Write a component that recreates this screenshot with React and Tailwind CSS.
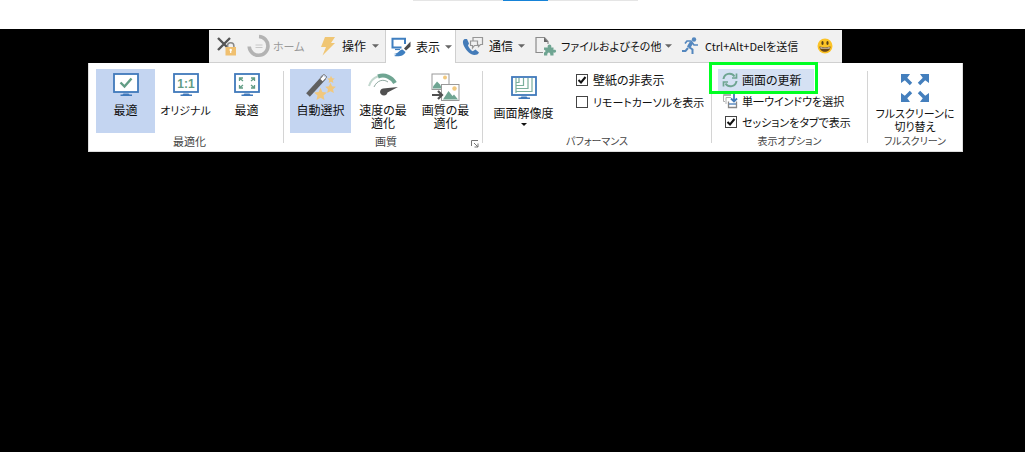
import { useState } from 'react'
import clsx from 'clsx'

function Caret({ className = 'w-[7px] h-1' }) {
  return (
    <svg viewBox="0 0 8 4" className={clsx('shrink-0', className)} fill="currentColor" aria-hidden="true">
      <path d="M0 0h8L4 4z" />
    </svg>
  )
}

function CloseLockIcon() {
  return (
    <svg viewBox="0 0 20 20" className="w-5 h-5 shrink-0" fill="none" aria-hidden="true">
      <path d="M1 2l12 12M13 2L1 14" stroke="#555" strokeWidth="2.400" />
      <path d="M10.500 12v-2a3.200 3.200 0 0 1 6.400 0v2" stroke="#888" strokeWidth="1.500" />
      <rect x="8.500" y="11" width="10.500" height="8.500" fill="#f0c070" />
      <circle cx="13.700" cy="14" r="1.200" fill="#fff" />
      <path d="M13.700 14v3" stroke="#fff" strokeWidth="1.200" />
    </svg>
  )
}

function HomeIcon() {
  return (
    <svg viewBox="0 0 24 24" className="w-6 h-6 shrink-0" fill="none" aria-hidden="true">
      <path d="M12 2.500a9.400 9.400 0 1 1-9.800 10" stroke="#b3b3b3" strokeWidth="3.600" />
      <path d="M8.500 11h7M8.500 13.500h7" stroke="#c8c8c8" />
    </svg>
  )
}

function BoltIcon() {
  return (
    <svg viewBox="0 0 16 20" className="w-4 h-5 shrink-0" fill="#f0c674" aria-hidden="true">
      <path d="M5 1h10l-4 6h4L2.500 19.500 6 11H1z" />
    </svg>
  )
}

function DisplayIcon() {
  return (
    <svg viewBox="0 0 20 20" className="w-5 h-5 shrink-0" fill="none" aria-hidden="true">
      <path d="M14 7V1.800H1.500v8.700h9" stroke="#3f7fc0" strokeWidth="2" />
      <path d="M4 12.500h5" stroke="#3f7fc0" strokeWidth="1.200" />
      <path d="M19.500 4.500v5L15 13.500l-2-2z" fill="#4d4d4d" />
      <path d="M11.500 12.500l3 2.500c-1 3.500-6 5-11.500 4l2.500-1.500-3-.5c5 0 5-4 9-4.500z" fill="#3f7fc0" />
    </svg>
  )
}

function CallIcon() {
  return (
    <svg viewBox="0 0 22 20" className="w-[22px] h-5 shrink-0" fill="none" aria-hidden="true">
      <path
        d="M3 3C.5 3.500.3 7 2.500 11s6 8 10 8c2 0 4-.8 4.500-2.500l-3.500-3-2.800 1.800C8.500 14 7 12 6 9.500L7 7.500 5 3z"
        fill="#447bb8"
      />
      <path
        d="M11 5V1.500h9.500v7h-2l-2 2V8.500M8.500 5h7v4.500h-3l-2 2.500V9.500h-2z"
        stroke="#969696"
        strokeWidth="1.200"
      />
    </svg>
  )
}

function FileIcon() {
  return (
    <svg viewBox="0 0 22 20" className="w-[22px] h-5 shrink-0" fill="none" aria-hidden="true">
      <path d="M8 16.500H1V1.500h8.500l3.500 4V8" stroke="#8b8b8b" strokeWidth="1.200" />
      <path d="M9 1.500v4.500h4z" fill="#666" />
      <path
        d="M9 11.500h3.800c-1.300-4 4.700-4 3.400 0h2.300v2.500c3.500-1.200 3.500 3.500 0 2.500v3h-3.200c.6-4-3.600-4-3 0H9v-3c2-.3 2-2.500 0-2.700z"
        fill="#6fa592"
      />
    </svg>
  )
}

function RunnerIcon() {
  return (
    <svg viewBox="0 0 18 20" className="w-[18px] h-5 shrink-0" fill="none" stroke="#5487be" aria-hidden="true">
      <circle cx="13" cy="3.500" r="2.200" fill="#5487be" stroke="none" />
      <path d="M10.500 6.500l-3 5" strokeWidth="3.600" />
      <path d="M4 7.500L6 5h4l3 4h4" strokeWidth="1.700" />
      <path d="M8 11l3.500 2.500V18M7 12l-2.500 3H1" strokeWidth="2" />
    </svg>
  )
}

function SmileIcon() {
  return (
    <svg viewBox="0 0 16 16" className="w-4 h-4 shrink-0" aria-hidden="true">
      <circle cx="8" cy="8" r="7.500" fill="#fcc326" />
      <ellipse cx="5.500" cy="5" rx="1.100" ry="2" fill="#594116" />
      <ellipse cx="10.500" cy="5" rx="1.100" ry="2" fill="#594116" />
      <path d="M2.500 8.500q5.500 1.500 11 0c0 7-11 7-11 0z" fill="#6b4716" />
      <path d="M3.300 9.200q4.700 1 9.400 0v1.200H3.500z" fill="#fff" />
    </svg>
  )
}

function MonitorIcon({ children }) {
  return (
    <svg viewBox="0 0 26 24" className="w-[26px] h-6 shrink-0" fill="none" aria-hidden="true">
      <rect x="1" y="1" width="24" height="18" fill="#fff" stroke="#4079bb" strokeWidth="1.800" />
      <path d="M10.500 20.500h5l1 1H19V23H7.500v-1.500h2z" fill="#4079bb" />
      {children}
    </svg>
  )
}

function FitIcon() {
  return (
    <MonitorIcon>
      <path d="M7.500 9.500l4 4 7-8" stroke="#629d85" strokeWidth="2.400" />
    </MonitorIcon>
  )
}

function OriginalIcon() {
  return (
    <MonitorIcon>
      <text x="13" y="14.500" textAnchor="middle" fill="#629d85" className="text-[12px] font-bold font-['Liberation_Sans',sans-serif]">
        1:1
      </text>
    </MonitorIcon>
  )
}

function ScaleIcon() {
  return (
    <MonitorIcon>
      <path
        d="M5.500 8V5H9M5.500 5L9 8M17 5h3.500v3M20.500 5L17 8M5.500 12v3H9M5.500 15L9 12M17 15h3.500v-3M20.500 15L17 12"
        stroke="#629d85"
        strokeWidth="1.300"
      />
    </MonitorIcon>
  )
}

function ResolutionIcon() {
  return (
    <MonitorIcon>
      <path d="M21 2v13.500H5M17 2v10.500H5M12.500 2v7.500H5M8 2v4.500H5M5 2v15" stroke="#7baf9c" strokeWidth="1.200" />
    </MonitorIcon>
  )
}

function WandIcon() {
  const star = 'M0-5l1.500 3.300 3.600.4-2.700 2.400.8 3.600L0 3 -3.200 4.700l.8-3.600-2.700-2.400 3.600-.4z'
  return (
    <svg viewBox="0 0 30 28" className="w-[30px] h-7 shrink-0" fill="none" aria-hidden="true">
      <path d="M2 22L18 4.500" stroke="#606060" strokeWidth="5" />
      <path d="M15.500 7.200l3-3.300" stroke="#fff" strokeWidth="3.200" />
      <path d="M14.500 4L18 1.300l3 2.700-3 3.300" stroke="#888" />
      <g fill="#f1c87e">
        <path d={star} transform="translate(14.500 21) scale(1.250)" />
        <path d={star} transform="translate(24.500 15) scale(1.050)" />
        <path d={star} transform="translate(25 6.500) scale(.75)" />
      </g>
    </svg>
  )
}

function SpeedIcon() {
  return (
    <svg viewBox="0 0 30 24" className="w-[30px] h-6 shrink-0" fill="none" aria-hidden="true">
      <path d="M1 13A14.500 14.500 0 0 1 10 3.200" stroke="#c2d7ce" strokeWidth="2" />
      <path d="M10 3.500c7-2.500 13.500.5 17 6.500" stroke="#6fa592" strokeWidth="4" />
      <path d="M6 14c3-6.500 9-8.500 14-5" stroke="#8fa8a0" />
      <path d="M30 14L15 15.500c-4.500 1-3.500 7 1 7 2 0 3-1.300 3.500-3z" fill="#505050" />
    </svg>
  )
}

function QualityIcon() {
  return (
    <svg viewBox="0 0 29 28" className="w-[29px] h-7 shrink-0" fill="none" aria-hidden="true">
      <rect x="1" y="1" width="17" height="15.500" fill="#fff" stroke="#999" />
      <circle cx="14" cy="4.500" r="2" fill="#f1c87e" />
      <path d="M2 15.500v-2l4-5 3 3 2 4z" fill="#6fa592" />
      <rect x="10.500" y="11.500" width="17.500" height="16" fill="#fff" stroke="#999" />
      <circle cx="23.500" cy="15.500" r="2.200" fill="#f1c87e" />
      <path d="M12 26.500l5.500-8.500 4 5 1.500-1.500 4 5z" fill="#6fa592" />
      <path d="M1 22h9M7 18l4 4-4 4" stroke="#505050" strokeWidth="2.200" />
    </svg>
  )
}

function RefreshIcon() {
  return (
    <svg viewBox="0 0 16 16" className="w-4 h-4 shrink-0" fill="none" stroke="#6fa592" strokeWidth="2" aria-hidden="true">
      <path d="M1.500 7A6 6 0 0 1 12.500 4.500M14.500 9A6 6 0 0 1 3.500 11.500" />
      <path d="M14.500 1.500v4.500H10M1.500 14.500V10H6" strokeWidth="1.700" />
    </svg>
  )
}

function WindowSelectIcon() {
  return (
    <svg viewBox="0 0 16 16" className="w-4 h-4 shrink-0" fill="none" aria-hidden="true">
      <path d="M3 8.500H1.500v-7H9M1.500 2.500H9M4 11V4.500h5" stroke="#b0b0b0" />
      <path d="M6.500 8.500v6h8v-6M6 14.500h9" stroke="#888" strokeWidth="1.300" />
      <path d="M12 1v7M9 5.500l3 3 3-3" stroke="#447bb8" strokeWidth="1.800" />
      <path d="M7 11h7" stroke="#447bb8" strokeWidth="1.300" />
    </svg>
  )
}

function FullscreenIcon() {
  return (
    <svg viewBox="0 0 30 30" className="w-[30px] h-[30px] shrink-0" fill="#447fbd" stroke="#447fbd" strokeWidth="3.400" aria-hidden="true">
      <path d="M4 4l7 7M26 4l-7 7M4 26l7-7M26 26l-7-7" />
      <path
        d="M1 1h9L7.500 4.500l-3 3L1 10zM29 1h-9l2.500 3.500 3 3L29 10zM1 29h9l-2.500-3.500-3-3L1 20zM29 29h-9l2.500-3.500 3-3L29 20z"
        stroke="none"
      />
    </svg>
  )
}

function LauncherIcon() {
  return (
    <svg viewBox="0 0 8 8" className="w-2 h-2" fill="none" stroke="#777" aria-hidden="true">
      <path d="M.5 6V.5H7M3 3l4 4M7 3.500V7H3.500" />
    </svg>
  )
}

function MenuButton({ icon, children, caret, className }) {
  return (
    <button type="button" className={clsx('flex items-center shrink-0 h-full', className)}>
      {icon}
      <span>{children}</span>
      {caret && <Caret className="w-[7px] h-1 text-[#666]" />}
    </button>
  )
}

function Group({ label, className, labelClassName = 'text-[10px]', children, launcher }) {
  return (
    <section className={clsx('flex flex-col shrink-0 pt-1.5', className)}>
      <div className="flex h-16">{children}</div>
      <div className={clsx('relative text-center leading-4 text-[#444]', labelClassName)}>
        {label}
        {launcher && (
          <button type="button" aria-label="画質の詳細" className="absolute right-[3px] top-[7px]">
            <LauncherIcon />
          </button>
        )}
      </div>
    </section>
  )
}

function BigButton({ icon, active, children, className }) {
  return (
    <button
      type="button"
      className={clsx(
        "flex flex-col items-center shrink-0 pt-1 leading-[13px] font-['Liberation_Sans','Noto_Sans_CJK_JP',sans-serif]",
        active && 'bg-[#c4d5f1]',
        className
      )}
    >
      <span className="flex h-8 shrink-0 items-start">{icon}</span>
      {children}
    </button>
  )
}

function CheckOption({ label, defaultChecked = false, className }) {
  const [checked, setChecked] = useState(defaultChecked)
  return (
    <label className={clsx('flex items-center h-[22px] gap-[5px]', className)}>
      <span className="grid w-3 h-3 shrink-0">
        <input
          type="checkbox"
          checked={checked}
          onChange={(e) => setChecked(e.target.checked)}
          className="appearance-none w-3 h-3 bg-white border border-[#444] col-start-1 row-start-1"
        />
        {checked && (
          <svg viewBox="0 0 12 12" className="w-3 h-3 col-start-1 row-start-1 pointer-events-none" fill="none" stroke="#111" strokeWidth="2" aria-hidden="true">
            <path d="M2.500 6l2.500 2.500L9.500 3" />
          </svg>
        )}
      </span>
      {label}
    </label>
  )
}

function Separator() {
  return <div className="w-px shrink-0 my-2 bg-[#d4d4d4]" />
}

export default function App() {
  return (
    <div className="min-h-screen flex flex-col bg-black text-[#111] text-[12px] leading-4 whitespace-nowrap font-['Noto_Sans_CJK_JP',sans-serif] [font-feature-settings:'palt']">
      <header className="flex justify-center pl-[26px] h-[29px] bg-white">
        <div className="flex h-px">
          <div className="w-[90px] bg-[#e5e5e5]" />
          <div className="w-[45px] bg-[#1683d8]" />
          <div className="w-[90px] bg-[#e5e5e5]" />
        </div>
      </header>

      <main className="flex flex-col items-center pl-[26px] pt-px">
        <nav className="flex items-center w-[633px] h-[33px] bg-[#f1f1f1] border-b border-[#d0d0d0]">
          <button type="button" aria-label="閉じる" className="ml-2">
            <CloseLockIcon />
          </button>
          <MenuButton icon={<HomeIcon />} className="w-[73px] ml-[10px] gap-0.5 text-[11px] text-[#999]">ホーム</MenuButton>
          <MenuButton icon={<BoltIcon />} className="w-[65px] gap-1.5" caret>操作</MenuButton>
          <div className="w-[71px] h-[34px] shrink-0 mt-px bg-white border-x border-[#cfcfcf]">
            <MenuButton icon={<DisplayIcon />} className="pl-[5px] gap-[5px]" caret>表示</MenuButton>
          </div>
          <MenuButton icon={<CallIcon />} className="w-[73px] ml-1.5 gap-[5px]" caret>通信</MenuButton>
          <MenuButton icon={<FileIcon />} className="w-[146px] gap-1 text-[11px]" caret>ファイルおよびその他</MenuButton>
          <MenuButton icon={<RunnerIcon />} className="w-[136px] gap-1.5 text-[11px]">Ctrl+Alt+Delを送信</MenuButton>
          <button type="button" aria-label="フィードバック">
            <SmileIcon />
          </button>
        </nav>

        <div className="flex w-[875px] h-[89px] bg-white border border-[#ddd] border-t-0">
          <Group label="最適化" className="w-[194px] pl-[7px]" labelClassName="text-[11px]">
            <BigButton icon={<FitIcon />} active className="w-[59px]">最適</BigButton>
            <BigButton icon={<OriginalIcon />} className="w-[61px] text-[11px]">オリジナル</BigButton>
            <BigButton icon={<ScaleIcon />} className="w-[61px]">最適</BigButton>
          </Group>
          <Separator />
          <Group label="画質" className="w-[198px] pl-1.5" labelClassName="text-[11px]" launcher>
            <BigButton icon={<WandIcon />} active className="w-[61px]">自動選択</BigButton>
            <BigButton icon={<SpeedIcon />} className="w-16">
              <span>速度の最</span>
              <span>適化</span>
            </BigButton>
            <BigButton icon={<QualityIcon />} className="w-[61px]">
              <span>画質の最</span>
              <span>適化</span>
            </BigButton>
          </Group>
          <Separator />
          <Group label="パフォーマンス" className="w-[228px]">
            <BigButton icon={<ResolutionIcon />} className="w-[61px] ml-[10px] mt-[3px]">
              画面解像度
              <Caret className="w-1.5 h-[3px] mt-0.5" />
            </BigButton>
            <div className="flex flex-col ml-[22px]">
              <CheckOption label="壁紙の非表示" defaultChecked />
              <CheckOption label="リモートカーソルを表示" className="text-[11px]" />
            </div>
          </Group>
          <Separator />
          <Group label="表示オプション" className="w-[155px]">
            <div className="relative flex flex-col ml-1.5">
              <button type="button" className="flex items-center w-24 h-[22px] pl-1 gap-1 bg-[#d5e1f3]">
                <RefreshIcon />
                画面の更新
              </button>
              <button type="button" className="flex items-center h-[21px] pl-1 gap-1 text-[11px]">
                <WindowSelectIcon />
                単一ウインドウを選択
              </button>
              <CheckOption label="セッションをタブで表示" defaultChecked className="pl-[7px] text-[11px]" />
              <div className="absolute -left-[9px] -top-[7px] w-[109px] h-8 border-3 border-[#0f2] pointer-events-none" />
            </div>
          </Group>
          <Separator />
          <Group label="フルスクリーン" className="grow">
            <BigButton icon={<FullscreenIcon />} className="w-full gap-[3px] text-[11px]">
              <span className="flex flex-col items-center">
                <span>フルスクリーンに</span>
                <span>切り替え</span>
              </span>
            </BigButton>
          </Group>
        </div>
      </main>
    </div>
  )
}
